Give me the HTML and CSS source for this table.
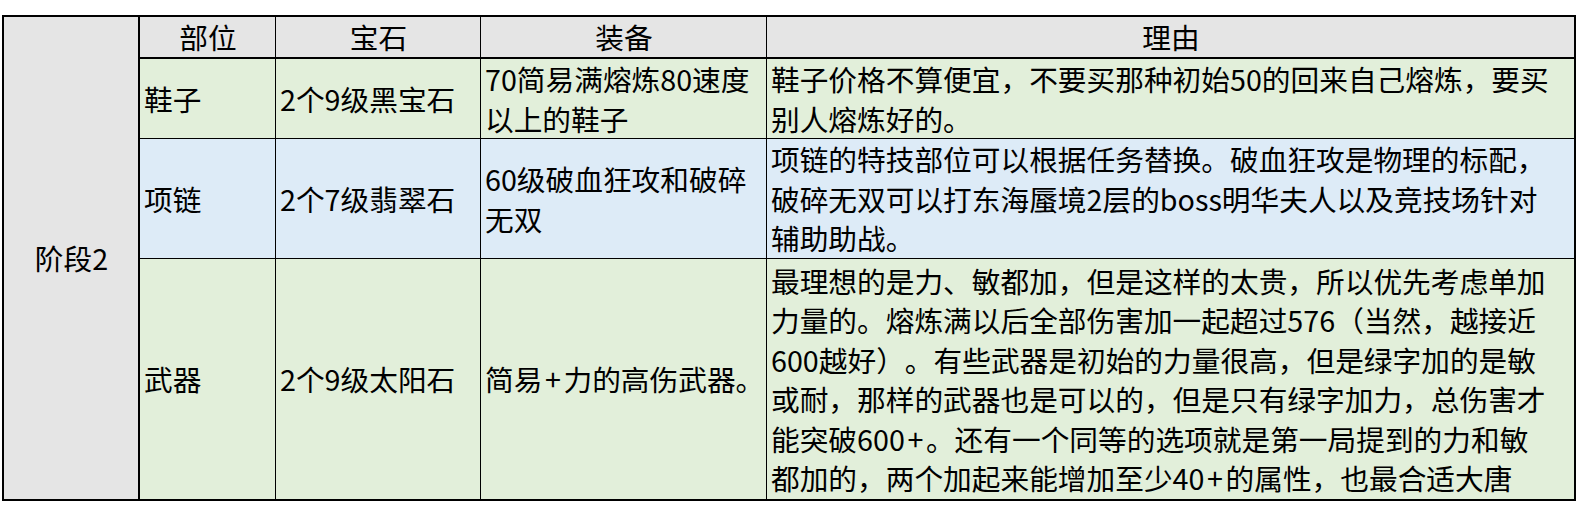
FILE: index.html
```html
<!DOCTYPE html>
<html lang="zh-CN">
<head>
<meta charset="utf-8">
<title>阶段2</title>
<link rel="stylesheet" href="styles.css">
</head>
<body>
<div class="sheet">
  <div class="cell stage"><div class="txt">阶段2</div></div>
  <div class="cell head"><div class="txt">部位</div></div>
  <div class="cell head"><div class="txt">宝石</div></div>
  <div class="cell head"><div class="txt">装备</div></div>
  <div class="cell head last"><div class="txt">理由</div></div>

  <div class="cell green"><div class="txt">鞋子</div></div>
  <div class="cell green"><div class="txt">2个9级黑宝石</div></div>
  <div class="cell green"><div class="txt">70简易满熔炼80速度<br>以上的鞋子</div></div>
  <div class="cell green last"><div class="txt">鞋子价格不算便宜，不要买那种初始50的回来自己熔炼，要买<br>别人熔炼好的。</div></div>

  <div class="cell blue"><div class="txt">项链</div></div>
  <div class="cell blue"><div class="txt">2个7级翡翠石</div></div>
  <div class="cell blue"><div class="txt">60级破血狂攻和破碎<br>无双</div></div>
  <div class="cell blue last"><div class="txt">项链的特技部位可以根据任务替换。破血狂攻是物理的标配，<br>破碎无双可以打东海蜃境2层的boss明华夫人以及竞技场针对<br>辅助助战。</div></div>

  <div class="cell green bottom"><div class="txt">武器</div></div>
  <div class="cell green bottom"><div class="txt">2个9级太阳石</div></div>
  <div class="cell green bottom"><div class="txt">简易<span class="plus">+</span>力的高伤武器。</div></div>
  <div class="cell green bottom last"><div class="txt">最理想的是力、敏都加，但是这样的太贵，所以优先考虑单加<br>力量的。熔炼满以后全部伤害加一起超过576（当然，越接近<br>600越好）。有些武器是初始的力量很高，但是绿字加的是敏<br>或耐，那样的武器也是可以的，但是只有绿字加力，总伤害才<br>能突破600<span class="plus">+</span>。还有一个同等的选项就是第一局提到的力和敏<br>都加的，两个加起来能增加至少40<span class="plus">+</span>的属性，也最合适大唐</div></div>
</div>
</body>
</html>
```

FILE: styles.css
```css
html, body {
  margin: 0;
  padding: 0;
  background: #ffffff;
}

body {
  font-family: "Noto Sans CJK SC", "Noto Sans", sans-serif;
  color: #000000;
}

.sheet {
  display: grid;
  width: max-content;
  margin: 15px 0 0 2px;
  grid-template-columns: 136px 136px 205px 286px 809px;
  grid-template-rows: 42px 80px 120px 242px;
  border-top: 2px solid #000;
  border-left: 2px solid #000;
}

.cell {
  box-sizing: border-box;
  border-right: 1px solid #000;
  border-bottom: 1px solid #000;
  display: flex;
  align-items: center;
  padding: 0 3px 0 4px;
  overflow: hidden;
  font-size: 28.7px;
  line-height: 39.5px;
  white-space: nowrap;
  text-spacing-trim: space-all;
}

.txt {
  white-space: nowrap;
  text-spacing-trim: space-all;
}

.plus {
  padding: 0 0.09em;
}

.stage {
  grid-row: 1 / span 4;
  grid-column: 1;
  background: #e5e5e5;
  border-right: 2px solid #000;
  border-bottom: 2px solid #000;
  justify-content: center;
}

.head {
  background: #e5e5e5;
  border-bottom: 2px solid #000;
  justify-content: center;
}

.last {
  border-right: 2px solid #000;
}

.bottom {
  border-bottom: 2px solid #000;
}

.green {
  background: #e2efda;
}

.blue {
  background: #ddebf7;
}
```
